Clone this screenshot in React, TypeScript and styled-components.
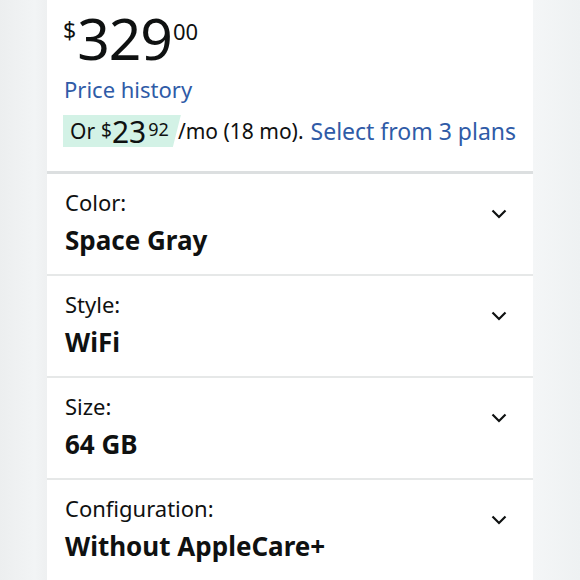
import React from "react";
import styled, { createGlobalStyle } from "styled-components";

const Global = createGlobalStyle`
  html, body { margin: 0; padding: 0; }
  body {
    width: 580px;
    height: 580px;
    overflow: hidden;
    font-family: "Noto Sans", "Liberation Sans", sans-serif;
    color: #0f1111;
  }
`;

const Page = styled.div`
  width: 580px;
  height: 580px;
  background: linear-gradient(90deg, #eceeef 0%, #f2f4f5 6%, #eef0f1 8%, #f6f7f8 50%, #f4f6f7 92%, #eef1f2 100%);
  display: flex;
  justify-content: flex-start;
  overflow: hidden;
`;

const Card = styled.div`
  margin-left: 47px;
  width: 486px;
  background: #ffffff;
  display: flex;
  flex-direction: column;
`;

const PriceSection = styled.div`
  padding: 10px 18px 0 17px;
  height: 174px;
  flex-shrink: 0;
  box-sizing: border-box;
  border-bottom: 3px solid #dcdfe0;
`;

const PriceRow = styled.div`
  display: flex;
  align-items: flex-start;
  height: 58px;
  margin-left: -1px;
`;

const Symbol = styled.span`
  font-size: 23px;
  line-height: 1;
  margin-top: 9px;
  margin-right: 1px;
`;

const Whole = styled.span`
  font-size: 57px;
  line-height: 1;
  letter-spacing: -1px;
`;

const Fraction = styled.span`
  font-size: 22px;
  line-height: 1;
  margin-top: 10px;
  margin-left: 1px;
`;

const Link = styled.a<{ $size?: number }>`
  color: #2f5ba7;
  text-decoration: none;
  font-size: ${(p) => p.$size ?? 22}px;
`;

const HistoryLine = styled.div`
  margin-top: 7px;
  line-height: 28px;
`;

const PlanLine = styled.div`
  margin-top: 9px;
  display: flex;
  align-items: center;
  font-size: 21px;
  white-space: nowrap;
  height: 32px;
`;

const Badge = styled.span`
  display: inline-flex;
  align-items: flex-start;
  height: 32px;
  padding: 0 12px 0 7px;
  margin-left: -1px;
  background: #d3f2e6;
  clip-path: polygon(0 0, 100% 0, calc(100% - 8px) 100%, 0 100%);
  box-sizing: border-box;
`;

const BadgeText = styled.span`
  font-size: 21px;
  line-height: 32px;
`;

const BadgeSym = styled.span`
  font-size: 19px;
  line-height: 1;
  margin-top: 6px;
  margin-left: 6px;
`;

const BadgeWhole = styled.span`
  font-size: 30px;
  line-height: 1;
  margin-top: 2px;
`;

const BadgeFrac = styled.span`
  font-size: 18px;
  line-height: 1;
  margin-top: 5px;
  margin-left: 2px;
`;

const PlanText = styled.span`
  margin-left: -3px;
  margin-right: 7px;
`;

const OptionRow = styled.div<{ $last?: boolean }>`
  height: 102px;
  flex-shrink: 0;
  box-sizing: border-box;
  display: flex;
  align-items: flex-start;
  justify-content: space-between;
  padding: 14px 26px 0 18px;
  border-bottom: ${(p) => (p.$last ? "none" : "2px solid #e6e8e8")};
`;

const OptionText = styled.div`
  display: flex;
  flex-direction: column;
`;

const Label = styled.div`
  font-size: 22px;
  line-height: 28px;
`;

const Value = styled.div`
  font-size: 26px;
  font-weight: 700;
  line-height: 32px;
  margin-top: 8px;
`;

const Chevron = styled.svg`
  margin-top: 21px;
  width: 16px;
  height: 10px;
`;

const options = [
  { label: "Color:", value: "Space Gray" },
  { label: "Style:", value: "WiFi" },
  { label: "Size:", value: "64 GB" },
  { label: "Configuration:", value: "Without AppleCare+" },
];

export default function App() {
  return (
    <>
      <Global />
      <Page>
        <Card>
          <PriceSection>
            <PriceRow>
              <Symbol>$</Symbol>
              <Whole>329</Whole>
              <Fraction>00</Fraction>
            </PriceRow>
            <HistoryLine>
              <Link href="#">Price history</Link>
            </HistoryLine>
            <PlanLine>
              <Badge>
                <BadgeText>Or</BadgeText>
                <BadgeSym>$</BadgeSym>
                <BadgeWhole>23</BadgeWhole>
                <BadgeFrac>92</BadgeFrac>
              </Badge>
              <PlanText>/mo (18 mo).</PlanText>
              <Link href="#" $size={23}>Select from 3 plans</Link>
            </PlanLine>
          </PriceSection>
          {options.map((o, i) => (
            <OptionRow key={o.label} $last={i === options.length - 1}>
              <OptionText>
                <Label>{o.label}</Label>
                <Value>{o.value}</Value>
              </OptionText>
              <Chevron viewBox="0 0 16 10">
                <polyline points="1.5,1.5 8,8 14.5,1.5" fill="none" stroke="#0f1111" strokeWidth="2.2" />
              </Chevron>
            </OptionRow>
          ))}
        </Card>
      </Page>
    </>
  );
}
